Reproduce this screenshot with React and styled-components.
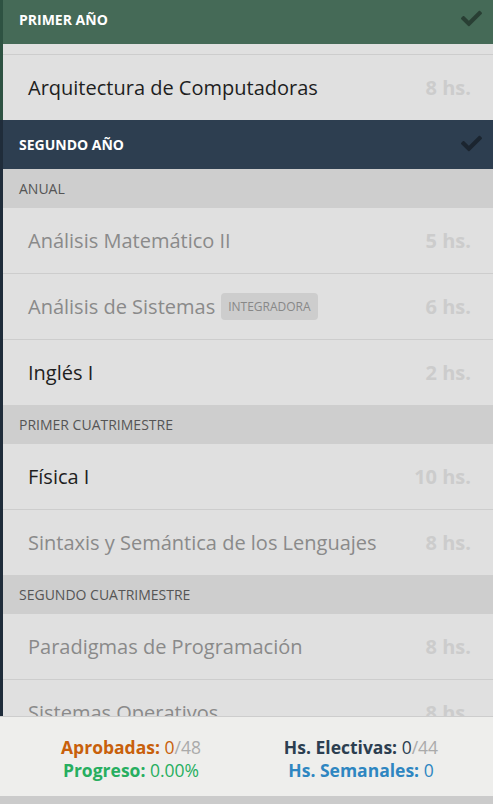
import React from "react";
import styled, { createGlobalStyle } from "styled-components";

const Global = createGlobalStyle`
  html, body { margin: 0; padding: 0; }
  body {
    background: #cbcbcb;
    font-family: "Open Sans", "DejaVu Sans", sans-serif;
  }
  * { box-sizing: border-box; }
`;

const Page = styled.div`
  height: 804px;
  display: flex;
  flex-direction: column;
  padding-bottom: 8px;
  background: #cbcbcb;
  overflow: hidden;
`;

const Scroller = styled.div`
  flex: 1;
  overflow: hidden;
  background: #e0e0e0;
`;

const List = styled.div`
  margin-top: -5px;
`;

const Year = styled.section`
  border-left: 3px solid ${(p) => p.$edge};
  background: #e0e0e0;
`;

const YearHeader = styled.header`
  height: 49px;
  display: flex;
  align-items: center;
  justify-content: space-between;
  padding: 0 11px 0 16px;
  background: ${(p) => p.$bg};
`;

const YearTitle = styled.h2`
  margin: 0;
  font-size: 14px;
  font-weight: 700;
  color: #fff;
  text-transform: uppercase;
`;

const Check = styled.svg`
  width: 21px;
  height: 21px;
  margin-top: -2px;
  fill: rgba(0, 0, 0, 0.4);
`;

const Filler = styled.div`
  height: 11px;
  border-bottom: 1px solid #cdcdcd;
`;

const Period = styled.div`
  height: 39.5px;
  display: flex;
  align-items: center;
  padding-left: 16px;
  background: #cecece;
  color: #555;
  font-size: 14px;
  text-transform: uppercase;
`;

const Row = styled.div`
  height: ${(p) => (p.$last ? "64.5px" : "66px")};
  display: flex;
  align-items: center;
  justify-content: space-between;
  padding: 0 22px 0 25px;
  border-bottom: ${(p) => (p.$last ? "none" : "1px solid #cdcdcd")};
`;

const Name = styled.span`
  display: flex;
  align-items: center;
  gap: 6px;
  font-size: 20px;
  color: ${(p) => (p.$active ? "#1e1e1e" : "#8a8a8a")};
`;

const Badge = styled.span`
  font-size: 12px;
  color: #888;
  background: #cdcdcd;
  border-radius: 4px;
  padding: 5px 7px;
  line-height: 17px;
  text-transform: uppercase;
`;

const Hours = styled.span`
  font-size: 20px;
  font-weight: 700;
  color: #cccccc;
`;

const Footer = styled.footer`
  height: 80px;
  flex: none;
  display: grid;
  grid-template-columns: 1fr 1fr;
  align-content: center;
  padding: 4px 17px 0 16px;
  background: #eeeeec;
  border-top: 1px solid #cdcdcd;
`;

const Stat = styled.div`
  text-align: center;
  font-size: 17.5px;
  line-height: 23px;
  color: ${(p) => p.$color};
`;

const Label = styled.b`
  font-weight: 700;
`;

const Total = styled.span`
  color: #aaa;
`;

const CheckIcon = () => (
  <Check viewBox="0 0 512 512">
    <path d="M173.898 439.404l-166.4-166.4c-9.997-9.997-9.997-26.206 0-36.204l36.203-36.204c9.997-9.998 26.207-9.998 36.204 0L192 312.69 432.095 72.596c9.997-9.997 26.207-9.997 36.204 0l36.203 36.204c9.997 9.997 9.997 26.206 0 36.204l-294.4 294.401c-9.998 9.997-26.207 9.997-36.204-.001z" />
  </Check>
);

const Subject = ({ name, hours, active, badge, last }) => (
  <Row $last={last}>
    <Name $active={active}>
      {name}
      {badge && <Badge>{badge}</Badge>}
    </Name>
    <Hours>{hours} hs.</Hours>
  </Row>
);

export default function App() {
  return (
    <>
      <Global />
      <Page>
        <Scroller>
          <List>
            <Year $edge="#2e5242">
              <YearHeader $bg="#456a57">
                <YearTitle>Primer Año</YearTitle>
                <CheckIcon />
              </YearHeader>
              <Filler />
              <Subject name="Arquitectura de Computadoras" hours={8} active last />
            </Year>
            <Year $edge="#1f2c3a">
              <YearHeader $bg="#2d3e50">
                <YearTitle>Segundo Año</YearTitle>
                <CheckIcon />
              </YearHeader>
              <Period>Anual</Period>
              <Subject name="Análisis Matemático II" hours={5} />
              <Subject name="Análisis de Sistemas" hours={6} badge="Integradora" />
              <Subject name="Inglés I" hours={2} active last />
              <Period>Primer Cuatrimestre</Period>
              <Subject name="Física I" hours={10} active />
              <Subject name="Sintaxis y Semántica de los Lenguajes" hours={8} last />
              <Period>Segundo Cuatrimestre</Period>
              <Subject name="Paradigmas de Programación" hours={8} />
              <Subject name="Sistemas Operativos" hours={8} />
            </Year>
          </List>
        </Scroller>
        <Footer>
          <Stat $color="#c8600b">
            <Label>Aprobadas:</Label> 0<Total>/48</Total>
          </Stat>
          <Stat $color="#2c3e50">
            <Label>Hs. Electivas:</Label> 0<Total>/44</Total>
          </Stat>
          <Stat $color="#27ae60">
            <Label>Progreso:</Label> 0.00%
          </Stat>
          <Stat $color="#2e86c1">
            <Label>Hs. Semanales:</Label> 0
          </Stat>
        </Footer>
      </Page>
    </>
  );
}
